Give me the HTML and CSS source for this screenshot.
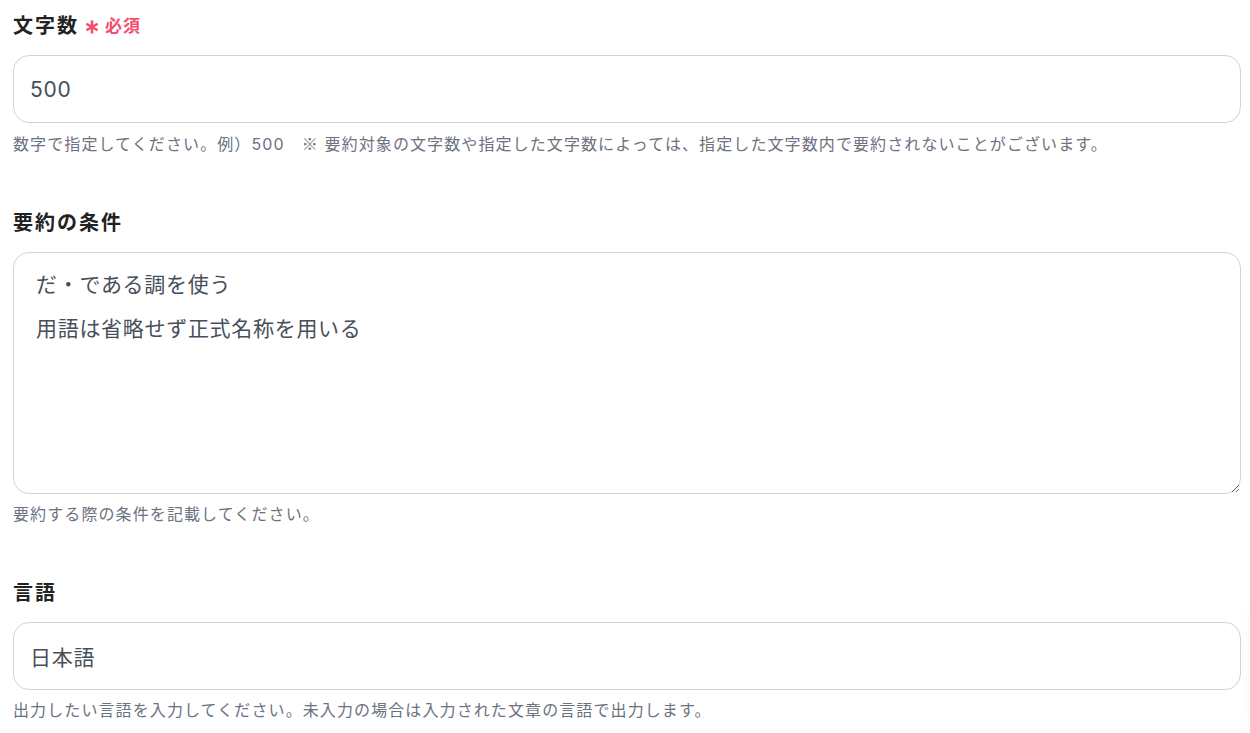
FILE: index.html
```html
<!DOCTYPE html>
<html lang="ja">
<head>
<meta charset="utf-8">
<title>要約設定</title>
<link rel="stylesheet" href="styles.css">
</head>
<body>
<form class="form">
  <div class="field">
    <label class="label">文字数<span class="req"><svg class="ast" width="14" height="14" viewBox="0 0 14 14" aria-hidden="true"><g stroke="currentColor" stroke-width="2.6" stroke-linecap="butt"><line x1="7" y1="0.5" x2="7" y2="13.5"/><line x1="1.4" y1="3.75" x2="12.6" y2="10.25"/><line x1="1.4" y1="10.25" x2="12.6" y2="3.75"/></g></svg>必須</span></label>
    <input class="input" type="text" value="500">
    <p class="help">数字で指定してください。例）500　<span class="cjk">※</span> 要約対象の文字数や指定した文字数によっては、指定した文字数内で要約されないことがございます。</p>
  </div>
  <div class="field">
    <label class="label">要約の条件</label>
    <textarea class="textarea">だ・である調を使う
用語は省略せず正式名称を用いる</textarea>
    <p class="help">要約する際の条件を記載してください。</p>
  </div>
  <div class="field">
    <label class="label">言語</label>
    <input class="input" type="text" value="日本語">
    <p class="help">出力したい言語を入力してください。未入力の場合は入力された文章の言語で出力します。</p>
  </div>
</form>
<div class="floater"></div>
</body>
</html>
```
FILE: styles.css
```css
html, body {
  margin: 0;
  padding: 0;
  background: #ffffff;
  overflow: hidden;
}
body {
  font-family: Inter, "Noto Sans CJK JP", sans-serif;
  padding: 11px 9px 0 13px;
}
.form {
  display: flex;
  flex-direction: column;
  gap: 52px;
}
.field {
  display: flex;
  flex-direction: column;
}
.label {
  display: flex;
  align-items: center;
  height: 28px;
  font-family: "Noto Sans CJK JP", sans-serif;
  font-size: 20px;
  font-weight: 700;
  line-height: 28px;
  letter-spacing: 0.1em;
  color: #222222;
  margin-bottom: 16px;
}
.req {
  display: inline-flex;
  align-items: center;
  margin-left: 6px;
  font-size: 17px;
  font-weight: 700;
  color: #f34f6b;
  letter-spacing: 0.06em;
}
.ast {
  margin-right: 6px;
  position: relative;
  top: 2px;
}
.input, .textarea {
  box-sizing: border-box;
  width: 100%;
  border: 1px solid #cfd4dc;
  border-radius: 16px;
  background: #fff;
  font-family: Inter, "Noto Sans CJK JP", sans-serif;
  font-size: 21px;
  letter-spacing: 0.7px;
  color: #474f5a;
  outline: none;
  margin: 0;
}
.input {
  height: 68px;
  padding: 0 16px;
}
.textarea {
  height: 242px;
  padding: 10px 22px;
  line-height: 44px;
  resize: vertical;
  display: block;
}
.help {
  margin: 8px 0 0;
  font-family: Inter, "Noto Sans CJK JP", sans-serif;
  font-size: 16px;
  line-height: 24px;
  letter-spacing: 1.1px;
  color: #6b7280;
}
.cjk {
  font-family: "Noto Sans CJK JP", sans-serif;
}
.floater {
  position: fixed;
  right: -70px;
  bottom: -10px;
  width: 60px;
  height: 140px;
  border-radius: 30px;
  background: #fff;
  box-shadow: 0 0 30px rgba(0, 0, 0, 0.07);
}
```
